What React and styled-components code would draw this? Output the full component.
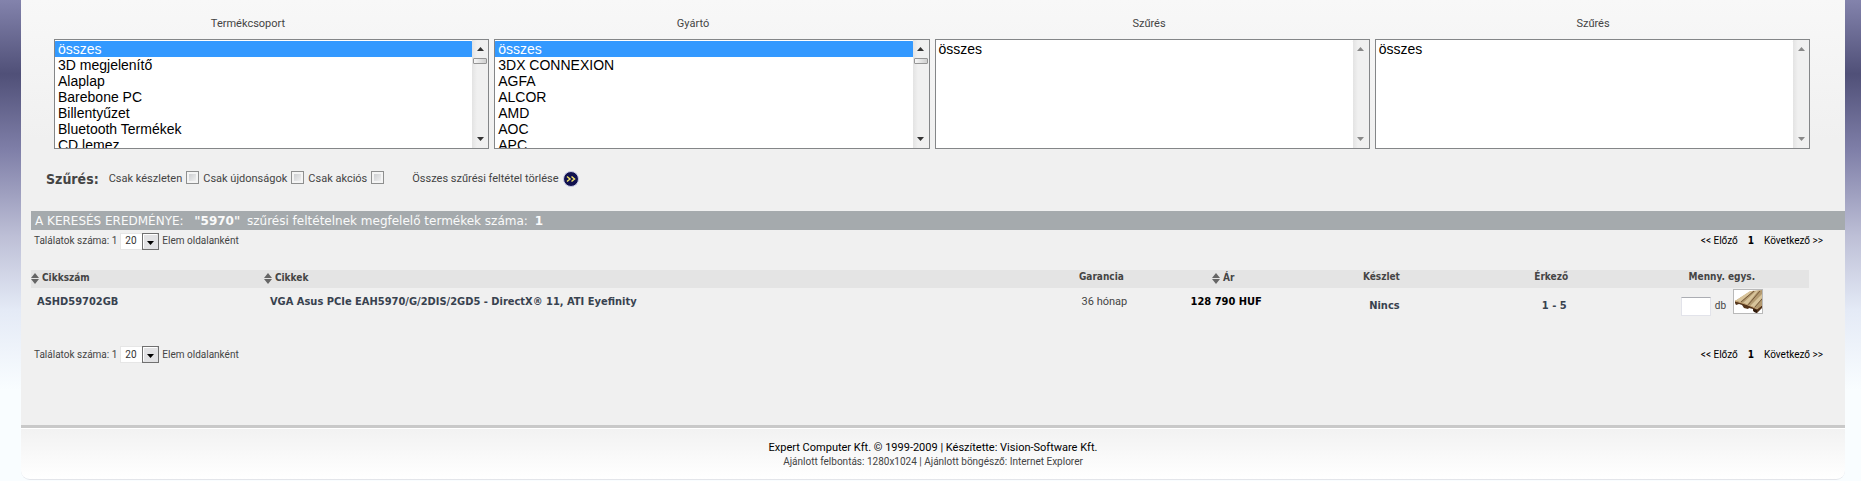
import React, { memo, useState } from "react";
import styled, { createGlobalStyle, css } from "styled-components";

const GlobalStyle = createGlobalStyle`
  * {
    box-sizing: border-box;
  }

  body {
    margin: 0;
    color: #444;
    font-family: Roboto, "Noto Sans", sans-serif;
    font-size: 11px;
    line-height: 14px;
    background: #f9fdff linear-gradient(#8383ac 0, #505078 74px, #7f7fa8 150px, #bdbfd6 236px, #e4eaf6 310px, #f9fdff 390px) no-repeat;
  }

  a {
    color: inherit;
    text-decoration: none;
  }

  strong,
  th {
    font-family: "DejaVu Sans Condensed", "Noto Sans", sans-serif;
  }
`;

const Page = styled.div`
  margin: 0 16px 0 21px;
`;

const Content = styled.main`
  padding: 17px 0 60px 10px;
  border-bottom: 3px solid #c9c9c9;
  background: linear-gradient(#f8f8f8, #f0f0f0 140px);
`;

/** Filter lists */
const FilterTitles = styled.div`
  display: grid;
  grid-template-columns: 434fr 456fr 456fr 432fr;
  margin-right: 36px;
  text-align: center;
`;

const FilterLists = styled.div`
  display: grid;
  grid-template-columns: repeat(4, 1fr);
  gap: 5px;
  margin: 8px 35px 0 23px;
`;

const ListFrame = styled.div`
  display: flex;
  height: 110px;
  border: 1px solid #848688;
  background: #fff;

  select {
    flex: 1;
    min-width: 0;
    height: 108px;
    padding: 1px 0 0;
    border: 0;
    outline: 0;
    background: #fff;
    font: 14px/16px "Liberation Sans", Arial, sans-serif;
    color: #000;
    overflow-y: scroll;
    scrollbar-width: none;
  }

  option {
    height: 16px;
    min-height: 16px;
    padding: 0 3px;
    line-height: 16px;
  }

  ${({ $active }) =>
    $active &&
    css`
      option:checked {
        background-image: linear-gradient(#39f, #39f);
        -webkit-text-fill-color: #fff;
      }
    `}

  ${({ $active }) =>
    !$active &&
    css`
      option:checked {
        background-image: linear-gradient(#fff, #fff);
        -webkit-text-fill-color: #000;
      }
    `}
`;

const ScrollBar = styled.div`
  display: flex;
  flex-direction: column;
  width: 16px;
  background: linear-gradient(90deg, #e3e3e3, #f0f0f0 5px);
  color: ${({ $active }) => ($active ? "#333" : "#888")};
`;

const ScrollButton = styled.button`
  display: flex;
  align-items: center;
  justify-content: center;
  height: 18px;
  padding: 0;
  border: 0;
  background: none;
  color: inherit;
`;

const ScrollThumb = styled.div`
  height: 6px;
  margin: 0 1px;
  border: 1px solid #959595;
  border-radius: 1px;
  background: linear-gradient(90deg, #f6f6f6, #cfcfcf);
`;

const ScrollSpace = styled.div`
  flex: 1;
`;

/** Tick boxes */
const FilterBar = styled.div`
  display: flex;
  align-items: center;
  height: 20px;
  margin: 20px 0 22px 15px;
`;

const FilterName = styled.strong`
  margin-right: 10px;
  font-size: 14px;
`;

const Check = styled.label`
  display: flex;
  align-items: center;
  gap: 4px;
  margin-right: 4px;

  input {
    appearance: none;
    width: 13px;
    height: 13px;
    margin: 0 0 4px;
    border: 1px solid #8e8f8f;
    background: linear-gradient(135deg, #c4c6c9, #f8f8f8);
    box-shadow: inset 0 0 0 2px #f4f4f4;
  }
`;

const ClearLink = styled.a`
  display: flex;
  align-items: center;
  gap: 4px;
  margin-left: 24px;
`;

/** Results */
const ResultBar = styled.h1`
  margin: 0;
  padding: 2px 4px 0;
  height: 19px;
  background: #a5aaad;
  color: #fafafa;
  font: 12px/17px "DejaVu Sans", Verdana, sans-serif;
  white-space: pre;

  b {
    margin: 0 3px;
  }
`;

const PagerRow = styled.div`
  display: flex;
  align-items: center;
  justify-content: space-between;
  height: 20px;
  padding: 0 22px 0 3px;
  margin-top: ${({ $top }) => $top}px;
  font-size: 10px;
`;

const PageSize = styled.label`
  display: flex;
  align-items: center;
  gap: 3px;
`;

const SelectBox = styled.span`
  position: relative;
  width: 39px;
  height: 17px;

  select {
    appearance: none;
    display: block;
    width: 100%;
    height: 100%;
    padding: 0 0 0 4px;
    border: 1px solid #e6e6e6;
    border-radius: 0;
    background: #fff;
    font: inherit;
    color: #333;
  }

  svg {
    position: absolute;
    top: 0;
    right: 0;
    pointer-events: none;
  }
`;

const Pages = styled.nav`
  display: flex;
  gap: 10px;
  color: #000;
`;

const Products = styled.table`
  width: calc(100% - 36px);
  margin-top: 19px;
  border-collapse: collapse;
  table-layout: fixed;

  thead {
    background: #e4e4e4;
  }

  th,
  td {
    padding: 0;
    text-align: center;
  }

  th {
    height: 16px;
    font-size: 10px;
    vertical-align: top;
  }

  td {
    height: 41px;
    vertical-align: top;
    padding: 7px 0 0 6px;
  }

  th:nth-child(-n + 2),
  td:nth-child(-n + 2) {
    text-align: left;
  }
`;

const Column = styled.col`
  width: ${({ $width }) => $width};
`;

const SortButton = styled.button`
  display: inline-flex;
  align-items: center;
  gap: 3px;
  height: 16px;
  padding: 0;
  border: 0;
  background: none;
  color: inherit;
  font: inherit;
`;

const ProductLink = styled.a`
  color: #38424f;
`;

const Price = styled.strong`
  color: #000;
`;

const Stock = styled.strong`
  display: block;
  padding-top: 4px;
  color: #38424f;
`;

const Order = styled.form`
  display: flex;
  justify-content: center;
  gap: 4px;
  margin: -6px 6px 0 0;
  font-size: 10px;

  label {
    display: flex;
    align-items: center;
    gap: 4px;
    margin-top: 8px;
    height: 19px;
  }

  input {
    width: 30px;
    height: 19px;
    padding: 0 2px;
    border: 1px solid #e2e3ea;
    border-top-color: #abadb3;
    background: #fff;
  }

  button {
    display: flex;
    margin-left: 3px;
    padding: 0;
    width: 30px;
    height: 25px;
    border: 1px solid #b9b9b9;
    background: #fff;
  }
`;

const Footer = styled.footer`
  height: 52px;
  padding: 12px 0 0;
  border-top: 1px solid #fff;
  border-bottom: 1px solid #e3e5ea;
  border-radius: 0 0 9px 9px;
  background: linear-gradient(#f2f2f2, #fff);
  text-align: center;
  font-size: 10px;

  p {
    margin: 0;
  }

  p:first-child {
    color: #000;
    font-size: 11px;
  }
`;

const filters = [
  {
    id: "group",
    title: "Termékcsoport",
    options: ["összes", "3D megjelenítő", "Alaplap", "Barebone PC", "Billentyűzet", "Bluetooth Termékek", "CD lemez"],
  },
  {
    id: "maker",
    title: "Gyártó",
    options: ["összes", "3DX CONNEXION", "AGFA", "ALCOR", "AMD", "AOC", "APC"],
  },
  { id: "filter1", title: "Szűrés", options: ["összes"] },
  { id: "filter2", title: "Szűrés", options: ["összes"] },
];

const checks = ["Csak készleten", "Csak újdonságok", "Csak akciós"];

const Triangle = ({ down }) => (
  <svg width="7" height="4" viewBox="0 0 7 4" aria-hidden="true">
    <path d={down ? "M0 0h7L3.5 4z" : "M0 4h7L3.5 0z"} fill="currentColor" />
  </svg>
);

const SortIcon = () => (
  <svg width="8" height="11" viewBox="0 0 8 11" aria-hidden="true">
    <path d="M0 5h8L4 0zM0 6h8l-4 5z" fill="#666" />
  </svg>
);

const ClearIcon = () => (
  <svg width="16" height="16" viewBox="0 0 16 16" aria-hidden="true">
    <circle cx="8" cy="8" r="7.5" fill="#11114f" stroke="#c9cbe6" />
    <path d="M4 5.500l3 2.500-3 2.500M8.500 5.500l3 2.500-3 2.500" fill="none" stroke="#f0e36a" strokeWidth="1.500" />
  </svg>
);

const PalletIcon = () => (
  <svg width="28" height="23" viewBox="0 0 28 23" aria-hidden="true">
    <path d="M1 11L17 1l11-1v18l-7 1z" fill="#b39a70" />
    <path d="M1 11L16 1h3L6 12zM9 13L22 1h2L13 15zM16 16L28 4v4l-8 10z" fill="#d8c49b" />
    <path d="M7 12L20 1M14 15L26 1M20 18l8-9" stroke="#75593a" fill="none" />
    <path d="M1 11l7 2 6 2 7 3 2 1 5-4v3l-5 5-4-2v-2l-4-1-1 1-4-1-2-3-3-1-3 1-1-2z" fill="#54351b" />
    <path d="M1 11l7 2 6 2 7 3 2 1 5-4" stroke="#c3a375" fill="none" />
    <path d="M19 19l4 1v3l-3-1z" fill="#2e1a0c" />
  </svg>
);

const FilterList = memo(({ filter }) => {
  const active = filter.options.length > 1;

  return (
    <ListFrame $active={active}>
      <select id={filter.id} size={7} defaultValue="összes">
        {filter.options.map((v) => (
          <option key={v} value={v}>
            {v}
          </option>
        ))}
      </select>
      <ScrollBar $active={active}>
        <ScrollButton type="button" aria-label="Fel">
          <Triangle />
        </ScrollButton>
        {active && <ScrollThumb />}
        <ScrollSpace />
        <ScrollButton type="button" aria-label="Le">
          <Triangle down />
        </ScrollButton>
      </ScrollBar>
    </ListFrame>
  );
});

const Pager = memo(({ top, size, onChange }) => (
  <PagerRow $top={top}>
    <PageSize>
      Találatok száma: 1
      <SelectBox>
        <select value={size} onChange={onChange}>
          <option value="20">20</option>
          <option value="50">50</option>
        </select>
        <svg width="17" height="17" viewBox="0 0 17 17" aria-hidden="true">
          <rect x="0.500" y="0.500" width="16" height="16" fill="#e2e2e4" stroke="#707070" />
          <path d="M1.500 15V1.500H15" stroke="#fff" fill="none" />
          <path d="M5 8h7l-3.500 4z" fill="#000" />
        </svg>
      </SelectBox>
      Elem oldalanként
    </PageSize>
    <Pages>
      <a href="#prev">&lt;&lt; Előző</a>
      <strong>1</strong>
      <a href="#next">Következő &gt;&gt;</a>
    </Pages>
  </PagerRow>
));

const App = () => {
  const [size, setSize] = useState("20");

  const handleSizeChange = (e) => {
    setSize(e.target.value);
  };

  return (
    <Page>
      <GlobalStyle />
      <Content>
        <FilterTitles>
          {filters.map((v) => (
            <label key={v.id} htmlFor={v.id}>
              {v.title}
            </label>
          ))}
        </FilterTitles>
        <FilterLists>
          {filters.map((v) => (
            <FilterList key={v.id} filter={v} />
          ))}
        </FilterLists>

        <FilterBar>
          <FilterName>Szűrés:</FilterName>
          {checks.map((v) => (
            <Check key={v}>
              {v}
              <input type="checkbox" />
            </Check>
          ))}
          <ClearLink href="#clear">
            Összes szűrési feltétel törlése
            <ClearIcon />
          </ClearLink>
        </FilterBar>

        <ResultBar>
          A KERESÉS EREDMÉNYE:{"  "}
          <b>"5970"</b> szűrési feltételnek megfelelő termékek száma: <b>1</b>
        </ResultBar>

        <Pager top={1} size={size} onChange={handleSizeChange} />

        <Products>
          <colgroup>
            <Column $width="13.1%" />
            <Column />
            <Column $width="5.6%" />
            <Column $width="8.1%" />
            <Column $width="9.7%" />
            <Column $width="9.4%" />
            <Column $width="9.8%" />
          </colgroup>
          <thead>
            <tr>
              <th>
                <SortButton type="button">
                  <SortIcon />
                  Cikkszám
                </SortButton>
              </th>
              <th>
                <SortButton type="button">
                  <SortIcon />
                  Cikkek
                </SortButton>
              </th>
              <th>Garancia</th>
              <th>
                <SortButton type="button">
                  <SortIcon />
                  Ár
                </SortButton>
              </th>
              <th>Készlet</th>
              <th>Érkező</th>
              <th>Menny. egys.</th>
            </tr>
          </thead>
          <tbody>
            <tr>
              <td>
                <ProductLink href="#product">
                  <strong>ASHD59702GB</strong>
                </ProductLink>
              </td>
              <td>
                <ProductLink href="#product">
                  <strong>VGA Asus PCIe EAH5970/G/2DIS/2GD5 - DirectX® 11, ATI Eyefinity</strong>
                </ProductLink>
              </td>
              <td>36 hónap</td>
              <td>
                <Price>128 790 HUF</Price>
              </td>
              <td>
                <Stock>Nincs</Stock>
              </td>
              <td>
                <Stock>1 - 5</Stock>
              </td>
              <td>
                <Order>
                  <label>
                    <input type="text" />
                    db
                  </label>
                  <button type="button" aria-label="Kosárba">
                    <PalletIcon />
                  </button>
                </Order>
              </td>
            </tr>
          </tbody>
        </Products>

        <Pager top={16} size={size} onChange={handleSizeChange} />
      </Content>

      <Footer>
        <p>Expert Computer Kft. © 1999-2009 | Készítette: Vision-Software Kft.</p>
        <p>Ajánlott felbontás: 1280x1024 | Ajánlott böngésző: Internet Explorer</p>
      </Footer>
    </Page>
  );
};

export default App;
